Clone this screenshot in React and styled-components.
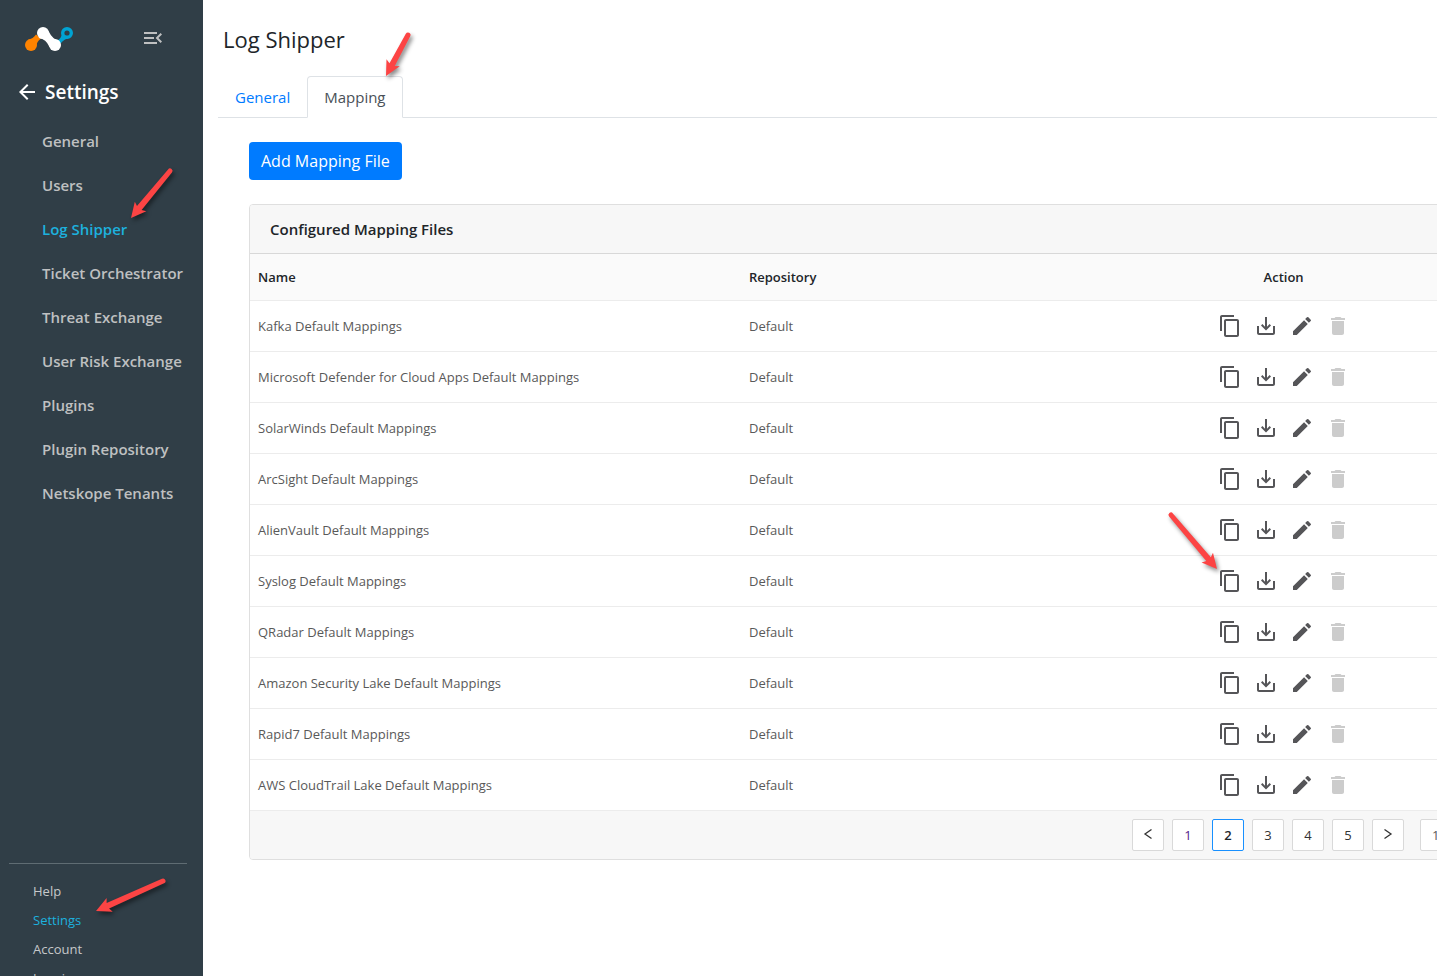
import React, { useState } from "react";
import styled, { createGlobalStyle } from "styled-components";
import {
  MdArrowBack,
  MdContentCopy,
  MdDelete,
  MdEdit,
  MdMenuOpen,
  MdSaveAlt,
} from "react-icons/md";

const GlobalStyle = createGlobalStyle`
  * {
    box-sizing: border-box;
  }

  body {
    margin: 0;
    background-color: #fff;
    color: #212529;
    font-family: "Segoe UI", "Open Sans", "Noto Sans", sans-serif;
    font-size: 15px;
    line-height: 24px;
  }

  button, select {
    font-family: inherit;
    cursor: pointer;
  }

  a {
    text-decoration: none;
  }
`;

const Page = styled.div`
  position: relative;
  display: flex;
  height: 100vh;
  overflow: hidden;
`;

const Sidebar = styled.aside`
  display: flex;
  flex-direction: column;
  flex: 0 0 203px;
  overflow: hidden;
  background-color: #303e47;
`;

const Brand = styled.div`
  display: flex;
  align-items: center;
  justify-content: space-between;
  padding: 25px 38px 0 24px;
`;

const MenuButton = styled.button`
  display: flex;
  padding: 0;
  border: 0;
  background: none;
  color: #bfc0c1;
`;

const BackLink = styled.a`
  display: flex;
  align-items: center;
  gap: 6px;
  margin-top: 29px;
  padding-left: 15px;
  color: #fff;
  font-size: 19px;
  font-weight: 600;
`;

const NavList = styled.ul`
  flex: 1;
  margin: 15px 0 0;
  padding: 0 0 0 42px;
  list-style: none;
`;

const NavLink = styled.a`
  display: block;
  padding: 10px 0;
  color: ${({ $active }) => ($active ? "#1db1de" : "#bfc0c1")};
  font-weight: 600;
  white-space: nowrap;
`;

/* the last item is cut by the bottom of the window */
const FooterList = styled.ul`
  flex: 0 0 113px;
  min-height: 0;
  margin: 0 16px 0 9px;
  padding: 13px 0 0 24px;
  border-top: 1px solid #5f6c73;
  list-style: none;
`;

const FooterLink = styled.a`
  display: block;
  color: ${({ $active }) => ($active ? "#1db1de" : "#c6c8ca")};
  font-size: 13px;
  line-height: 29px;
`;

const Main = styled.main`
  flex: 1;
  min-width: 0;
  padding: 23px 0 0 15px;
`;

const Title = styled.h1`
  margin: 0 0 21px 5px;
  font-size: 22px;
  font-weight: 400;
  line-height: 32px;
`;

const Tabs = styled.div`
  display: flex;
  border-bottom: 1px solid #dee2e6;
`;

const Tab = styled.button`
  margin-bottom: -1px;
  padding: 8px 16px;
  border: 1px solid transparent;
  border-radius: 4px 4px 0 0;
  background: none;
  color: #007bff;
  font-size: 15px;
  line-height: 24px;

  ${({ $active }) =>
    $active &&
    `
    border-color: #dee2e6 #dee2e6 #fff;
    background-color: #fff;
    color: #495057;
  `}
`;

const Content = styled.section`
  padding: 24px 0 0 31px;
`;

const PrimaryButton = styled.button`
  display: block;
  height: 38px;
  padding: 0 12px;
  border: 0;
  border-radius: 4px;
  background-color: #007bff;
  color: #fff;
  font-size: 16px;
  line-height: 24px;
`;

/* runs past the right edge of the window */
const Card = styled.div`
  margin: 24px -106px 0 0;
  overflow: hidden;
  border: 1px solid #dfdfdf;
  border-radius: 4px;
`;

const CardHeader = styled.h2`
  margin: 0;
  padding: 12px 20px;
  border-bottom: 1px solid #d8d8d8;
  background-color: #f7f7f7;
  font-size: 15px;
  font-weight: 600;
  line-height: 24px;
`;

const Table = styled.table`
  width: 100%;
  border-collapse: separate;
  border-spacing: 0;
  table-layout: fixed;
`;

const Th = styled.th`
  width: ${({ $width }) => $width};
  height: 47px;
  padding: 0 8px;
  border-bottom: 1px solid #ececec;
  background-color: #fafafa;
  color: #212529;
  font-size: 13px;
  font-weight: 600;
  text-align: ${({ $center }) => ($center ? "center" : "left")};
`;

const Td = styled.td`
  height: 51px;
  padding: 0 8px;
  border-bottom: 1px solid #ececec;
  color: #595959;
  font-size: 13px;
`;

const Actions = styled.div`
  display: flex;
  justify-content: center;
  gap: 12px;
`;

const IconButton = styled.button`
  display: flex;
  padding: 0;
  border: 0;
  background: none;
  color: #555558;

  &:disabled {
    color: #ccc;
    cursor: default;
  }
`;

const CardFooter = styled.div`
  display: flex;
  justify-content: flex-end;
  gap: 8px;
  padding: 8px 16px 8px 0;
  background-color: #f7f7f7;
`;

const PageButton = styled.button`
  display: flex;
  align-items: center;
  justify-content: center;
  width: 32px;
  height: 32px;
  padding: 0;
  border: 1px solid ${({ $active }) => ($active ? "#1890ff" : "#d9d9d9")};
  border-radius: 2px;
  background-color: #fff;
  color: ${({ $active, $visited }) =>
    $visited ? "#551a8b" : $active ? "#212529" : "#333"};
  font-size: 13px;
  font-weight: ${({ $active }) => ($active ? 600 : 400)};
`;

const PageSize = styled.select`
  width: 106px;
  height: 32px;
  margin-left: 8px;
  padding: 0 11px;
  border: 1px solid #d9d9d9;
  border-radius: 2px;
  background-color: #fff;
  color: #595959;
  font-size: 13px;
  appearance: none;
`;

const Pointer = styled.svg`
  position: absolute;
  left: ${({ $left }) => $left}px;
  top: ${({ $top }) => $top}px;
  overflow: visible;
  pointer-events: none;
  filter: drop-shadow(2px 3px 2px rgba(0, 0, 0, 0.45));
`;

const navItems = [
  "General",
  "Users",
  "Log Shipper",
  "Ticket Orchestrator",
  "Threat Exchange",
  "User Risk Exchange",
  "Plugins",
  "Plugin Repository",
  "Netskope Tenants",
];

const footerItems = ["Help", "Settings", "Account", "Logging"];

const mappings = [
  "Kafka Default Mappings",
  "Microsoft Defender for Cloud Apps Default Mappings",
  "SolarWinds Default Mappings",
  "ArcSight Default Mappings",
  "AlienVault Default Mappings",
  "Syslog Default Mappings",
  "QRadar Default Mappings",
  "Amazon Security Lake Default Mappings",
  "Rapid7 Default Mappings",
  "AWS CloudTrail Lake Default Mappings",
];

const Logo = () => (
  <svg width="50" height="26" viewBox="0 -1 50 26" role="img" aria-label="Netskope">
    <path d="M3.500 14Q9.500 12.500 12 8.500L17 12.500Q12.500 15.500 11.500 22Z" fill="#ff8300" />
    <circle cx="7" cy="19" r="6" fill="#ff8300" />
    <path d="M33.500 14.500Q37 12.500 38 8L46 11.500Q40 13 36.500 17.500Z" fill="#00a3d3" />
    <circle cx="43" cy="7" r="4.300" fill="none" stroke="#00a3d3" strokeWidth="3.400" />
    <path d="M15 12Q22 13 25.500 21L35.500 15Q28.500 13.500 24.500 5Z" fill="#fff" />
    <circle cx="19" cy="7" r="6" fill="#fff" />
    <circle cx="31" cy="19" r="6" fill="#fff" />
  </svg>
);

// red arrow from its tail to its tip, in page coordinates
const Arrow = ({ from, to }) => {
  const left = Math.min(from[0], to[0]);
  const top = Math.min(from[1], to[1]);
  const length = Math.hypot(to[0] - from[0], to[1] - from[1]);
  const angle = (Math.atan2(to[1] - from[1], to[0] - from[0]) * 180) / Math.PI;

  return (
    <Pointer
      $left={left}
      $top={top}
      width={Math.abs(to[0] - from[0])}
      height={Math.abs(to[1] - from[1])}
      aria-hidden="true"
    >
      <g transform={`translate(${from[0] - left} ${from[1] - top}) rotate(${angle})`}>
        <path
          d={`M0 -2.500L${length - 13} -3L${length - 15} -7.500L${length} 0L${length - 15} 7.500L${length - 13} 3L0 2.500A2.500 2.500 0 0 1 0 -2.500Z`}
          fill="#fc4444"
        />
      </g>
    </Pointer>
  );
};

const Chevron = ({ next }) => (
  <svg width="12" height="12" viewBox="0 0 12 12" fill="none" stroke="#333" strokeWidth="1.3">
    <path d={next ? "M2.500 0.500L9 5L2.500 9.500" : "M9.500 0.500L3 5L9.500 9.500"} />
  </svg>
);

const MappingRow = ({ name }) => (
  <tr>
    <Td>{name}</Td>
    <Td>Default</Td>
    <Td>
      <Actions>
        <IconButton aria-label="Clone">
          <MdContentCopy size={24} />
        </IconButton>
        <IconButton aria-label="Download">
          <MdSaveAlt size={24} />
        </IconButton>
        <IconButton aria-label="Edit">
          <MdEdit size={24} />
        </IconButton>
        <IconButton aria-label="Delete" disabled>
          <MdDelete size={24} />
        </IconButton>
      </Actions>
    </Td>
    <Td />
  </tr>
);

const App = () => {
  const [tab, setTab] = useState("Mapping");
  const [page, setPage] = useState(2);

  return (
    <>
      <GlobalStyle />
      <Page>
        <Sidebar>
          <Brand>
            <Logo />
            <MenuButton aria-label="Collapse menu">
              <MdMenuOpen size={24} />
            </MenuButton>
          </Brand>
          <BackLink href="#">
            <MdArrowBack size={24} />
            Settings
          </BackLink>
          <NavList>
            {navItems.map((item) => (
              <li key={item}>
                <NavLink href="#" $active={item === "Log Shipper"}>
                  {item}
                </NavLink>
              </li>
            ))}
          </NavList>
          <FooterList>
            {footerItems.map((item) => (
              <li key={item}>
                <FooterLink href="#" $active={item === "Settings"}>
                  {item}
                </FooterLink>
              </li>
            ))}
          </FooterList>
        </Sidebar>

        <Main>
          <Title>Log Shipper</Title>
          <Tabs role="tablist">
            {["General", "Mapping"].map((name) => (
              <Tab
                key={name}
                role="tab"
                aria-selected={tab === name}
                $active={tab === name}
                onClick={() => setTab(name)}
              >
                {name}
              </Tab>
            ))}
          </Tabs>
          <Content>
            <PrimaryButton>Add Mapping File</PrimaryButton>
            <Card>
              <CardHeader>Configured Mapping Files</CardHeader>
              <Table>
                <thead>
                  <tr>
                    <Th $width="38%">Name</Th>
                    <Th $width="32%">Repository</Th>
                    <Th $width="20%" $center>
                      Action
                    </Th>
                    <Th $width="10%" />
                  </tr>
                </thead>
                <tbody>
                  {mappings.map((name) => (
                    <MappingRow key={name} name={name} />
                  ))}
                </tbody>
              </Table>
              <CardFooter>
                <PageButton aria-label="Previous page" onClick={() => setPage(Math.max(1, page - 1))}>
                  <Chevron />
                </PageButton>
                {[1, 2, 3, 4, 5].map((n) => (
                  <PageButton
                    key={n}
                    $active={n === page}
                    $visited={n === 1}
                    onClick={() => setPage(n)}
                  >
                    {n}
                  </PageButton>
                ))}
                <PageButton aria-label="Next page" onClick={() => setPage(Math.min(5, page + 1))}>
                  <Chevron next />
                </PageButton>
                <PageSize aria-label="Rows per page" defaultValue="10">
                  <option value="10">10 / page</option>
                  <option value="20">20 / page</option>
                </PageSize>
              </CardFooter>
            </Card>
          </Content>
        </Main>

        <Arrow from={[408, 35]} to={[386, 76]} />
        <Arrow from={[170, 171]} to={[131, 218]} />
        <Arrow from={[1171, 515]} to={[1217, 569]} />
        <Arrow from={[163, 881]} to={[96, 911]} />
      </Page>
    </>
  );
};

export default App;
